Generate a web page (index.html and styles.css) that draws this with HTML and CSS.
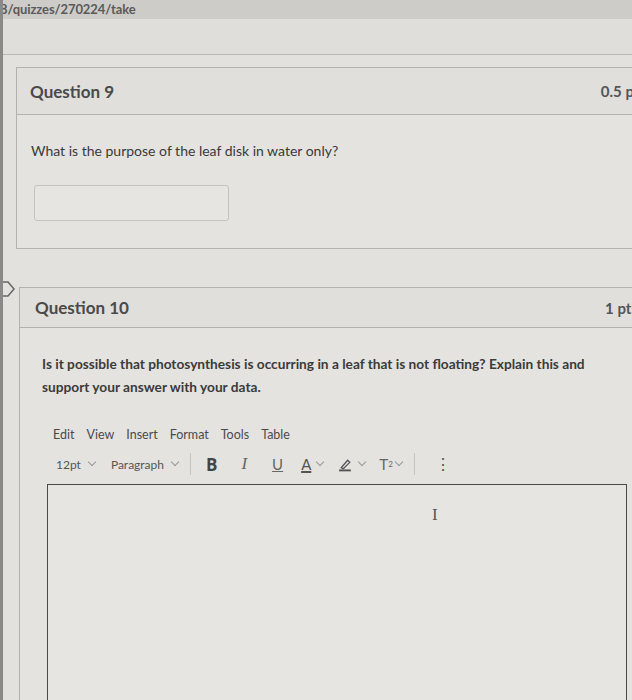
FILE: index.html
```html
<!DOCTYPE html>
<html>
<head>
<meta charset="utf-8">
<link rel="stylesheet" href="styles.css">
</head>
<body>
<div class="page">
  <div class="urlbar">8/quizzes/270224/take</div>
  <div class="strip"></div>
  <section class="card q9">
    <header class="qhead">
      <span class="qtitle">Question 9</span>
      <span class="pts">0.5 pts</span>
    </header>
    <div class="qbody">
      <p class="qtext">What is the purpose of the leaf disk in water only?</p>
      <div class="answer"></div>
    </div>
  </section>
  <div class="q10wrap">
    <svg class="flag" width="16" height="18" viewBox="0 0 16 18"><path d="M-2 2 H8 L14 9 L8 16 H-2" fill="none" stroke="#666" stroke-width="1.5"/></svg>
    <section class="card q10">
      <header class="qhead">
        <span class="qtitle">Question 10</span>
        <span class="pts">1 pts</span>
      </header>
      <div class="qbody b10">
        <p class="qtext bold">Is it possible that photosynthesis is occurring in a leaf that is not floating? Explain this and support your answer with your data.</p>
        <nav class="menu">
          <span>Edit</span><span>View</span><span>Insert</span><span>Format</span><span>Tools</span><span>Table</span>
        </nav>
        <div class="tools">
          <span class="tsel">12pt <i class="chev"></i></span>
          <span class="tsel para">Paragraph <i class="chev"></i></span>
          <span class="sep"></span>
          <span class="tb b">B</span>
          <span class="tb it">I</span>
          <span class="tb u">U</span>
          <span class="tb a">A<i class="chev"></i></span>
          <span class="tb hl"><svg width="15" height="15" viewBox="0 0 14 14"><path d="M3 10 L9 3 L11 5 L5 11 Z" fill="none" stroke="#555" stroke-width="1.2"/><path d="M1 12.5 H12" stroke="#555" stroke-width="1.8"/></svg><i class="chev"></i></span>
          <span class="tb sup">T<sup>2</sup><i class="chev"></i></span>
          <span class="sep sep2"></span>
          <span class="tb dots">&#8942;</span>
        </div>
        <div class="editor"><span class="ibeam">I</span></div>
      </div>
    </section>
  </div>
</div>
</body>
</html>
```
FILE: styles.css
```css
html, body {
  margin: 0;
  padding: 0;
  overflow: hidden;
}
body {
  background: #e2e1de;
  font-family: Lato, "Open Sans", sans-serif;
  color: #3a3a3a;
  width: 632px;
  height: 700px;
}
.page {
  width: 632px;
  height: 700px;
  overflow: hidden;
  border-left: 3px solid #8a8987;
  box-sizing: border-box;
}
.urlbar {
  height: 19px;
  line-height: 19px;
  background: #cdccc9;
  font-size: 13px;
  font-weight: 700;
  color: #5a5a5a;
  margin-left: -3px;
  letter-spacing: -0.1px;
}
.strip {
  height: 35px;
  border-bottom: 1.5px solid #b9b8b5;
  margin-bottom: 12px;
  background: #dfdedb;
}
.card {
  border: 1.5px solid #b3b2af;
  border-right: none;
  margin-right: -60px;
  background: #e4e3e0;
}
.q9 {
  margin-left: 13px;
}
.qhead {
  display: flex;
  align-items: center;
  height: 46px;
  border-bottom: 1.5px solid #b3b2af;
  background: #e0dfdc;
}
.qtitle {
  font-size: 17px;
  font-weight: 700;
  color: #4a4a4a;
  padding-left: 13px;
}
.q10 .qtitle {
  padding-left: 15px;
}
.pts {
  margin-left: auto;
  font-size: 15px;
  font-weight: 700;
  color: #555;
}
.q9 .pts { padding-right: 46px; }
.q10 .pts { padding-right: 54px; }
.qbody {
  padding: 27px 14px 26px;
}
.qtext {
  margin: 0;
  font-size: 14px;
  color: #3a3a3a;
}
.q9 .qbody {
  padding-bottom: 27px;
}
.answer {
  margin-top: 26px;
  margin-left: 3px;
  width: 193px;
  height: 34px;
  border: 1.5px solid #c4c3c0;
  border-radius: 3px;
  background: #e6e5e2;
}
.q10wrap {
  display: flex;
  align-items: flex-start;
  margin-top: 38px;
}
.flag {
  margin-top: -7px;
  margin-left: -3px;
  flex: none;
}
.q10 {
  flex: 1;
  margin-left: 3px;
}
.q10 .qhead {
  height: 39px;
}
.b10 {
  padding: 24px 0 0 22px;
}
.bold {
  font-weight: 700;
  font-size: 13.7px;
  line-height: 23px;
  width: 570px;
  color: #3b3b3b;
}
.menu {
  display: flex;
  gap: 12px;
  margin-top: 29px;
  margin-left: 11px;
  font-size: 12.5px;
  color: #4a4a4a;
}
.tools {
  display: flex;
  align-items: center;
  margin-top: 11px;
  margin-left: 14px;
  height: 22px;
  font-size: 12px;
  color: #555;
}
.tsel {
  display: inline-flex;
  align-items: center;
  gap: 5px;
  margin-right: 16px;
}
.para { margin-right: 12px; }
.chev {
  display: inline-block;
  width: 5px;
  height: 5px;
  border-right: 1px solid #999;
  border-bottom: 1px solid #999;
  transform: rotate(45deg);
  margin-top: -4px;
  margin-left: 3px;
}
.sep {
  width: 1px;
  height: 22px;
  background: #c6c5c2;
  margin-right: 15px;
}
.sep2 {
  margin-left: 0;
  margin-right: 20px;
}
.tb {
  display: inline-flex;
  align-items: center;
  margin-right: 24px;
  font-size: 16px;
  color: #444;
}
.tb.b { font-weight: 700; font-family: "Open Sans", sans-serif; font-size: 17px; }
.tb.it { font-family: "Liberation Serif", serif; font-style: italic; font-size: 17px; color: #666; margin-right: 25px; }
.tb.u { text-decoration: underline; font-size: 15px; color: #666; margin-right: 18px; }
.tb.a { font-size: 15px; color: #555; text-decoration: underline; text-decoration-thickness: 2px; gap: 3px; margin-right: 15px; }
.tb.hl { gap: 3px; margin-right: 14px; }
.tb.sup { font-size: 15px; color: #666; margin-right: 12px; }
.tb.sup sup { font-size: 8px; }
.tb.dots { font-size: 16px; color: #555; }
.editor {
  position: relative;
  margin-top: 9px;
  margin-left: 5px;
  width: 578px;
  height: 240px;
  border: 1.5px solid #4a4a4a;
  border-bottom: none;
  background: #e6e5e2;
}
.ibeam {
  position: absolute;
  left: 384px;
  top: 20px;
  font-family: "Liberation Serif", serif;
  font-size: 17px;
  color: #555;
}
```
